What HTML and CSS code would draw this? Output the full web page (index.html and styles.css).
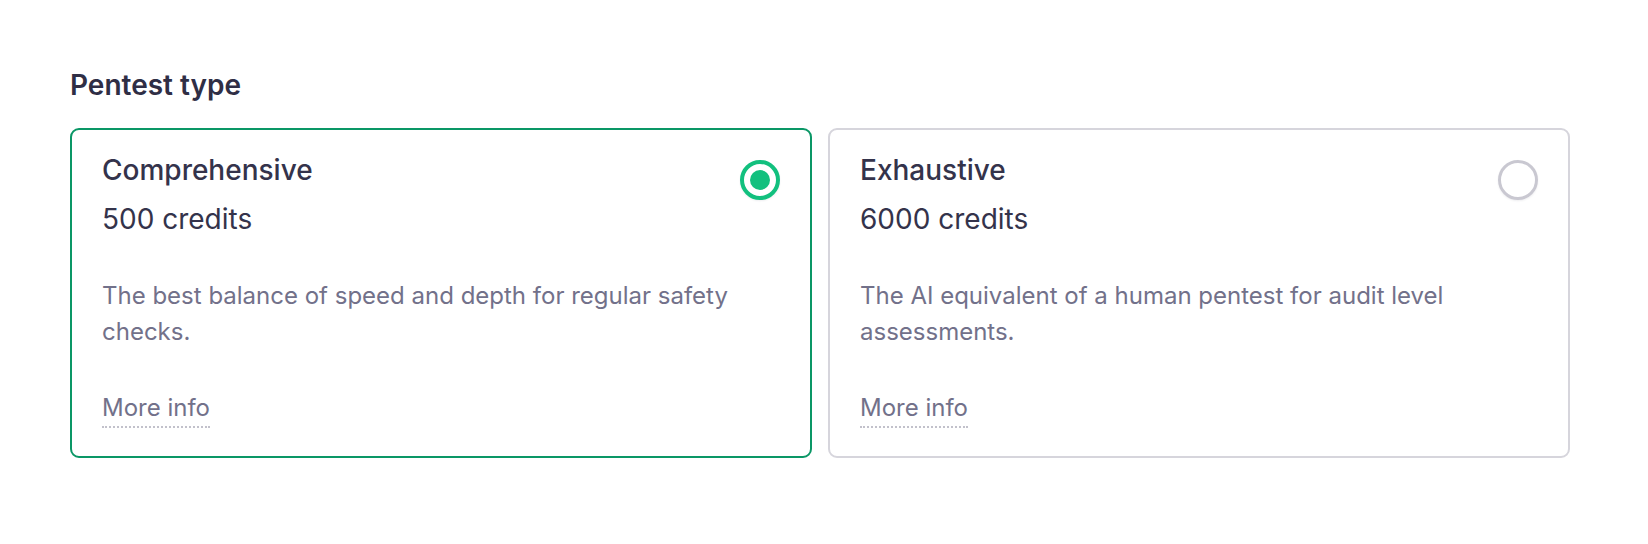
FILE: index.html
```html
<!DOCTYPE html>
<html lang="en">
<head>
<meta charset="utf-8">
<title>Pentest type</title>
<link rel="stylesheet" href="styles.css">
</head>
<body>
<main class="page">
  <h2 class="section-title">Pentest type</h2>
  <div class="options">
    <label class="option option--selected">
      <div class="option-head">
        <div class="option-text">
          <div class="option-name">Comprehensive</div>
          <div class="option-credits">500 credits</div>
        </div>
        <span class="radio radio--on"><span class="radio-dot"></span></span>
      </div>
      <p class="option-desc">The best balance of speed and depth for regular safety checks.</p>
      <a class="more-info">More info</a>
    </label>
    <label class="option">
      <div class="option-head">
        <div class="option-text">
          <div class="option-name">Exhaustive</div>
          <div class="option-credits">6000 credits</div>
        </div>
        <span class="radio"></span>
      </div>
      <p class="option-desc">The AI equivalent of a human pentest for audit level assessments.</p>
      <a class="more-info">More info</a>
    </label>
  </div>
</main>
</body>
</html>
```

FILE: styles.css
```css
* { box-sizing: border-box; }
html, body { margin: 0; padding: 0; background: #ffffff; }
body {
  font-family: Inter, "Noto Sans", "Liberation Sans", sans-serif;
  color: #2f2e45;
}
.page {
  padding: 66px 78px 0 70px;
}
.section-title {
  margin: 0 0 24px 0;
  font-size: 28px;
  line-height: 38px;
  font-weight: 600;
  color: #2f2e45;
}
.options {
  display: grid;
  grid-template-columns: 1fr 1fr;
  gap: 16px;
}
.option {
  display: flex;
  flex-direction: column;
  align-items: flex-start;
  height: 330px;
  padding: 22px 30px 24px 30px;
  border: 2px solid #d6d5dc;
  border-radius: 9px;
  background: #fff;
}
.option--selected { border-color: #0a9766; }
.option-head {
  display: flex;
  width: 100%;
  justify-content: space-between;
  align-items: flex-start;
}
.option-name {
  font-size: 28px;
  line-height: 36px;
  font-weight: 500;
  color: #34334b;
}
.option-credits {
  margin-top: 13px;
  font-size: 28px;
  line-height: 36px;
  font-weight: 400;
  color: #34334b;
}
.radio {
  flex: none;
  margin-top: 8px;
  width: 40px;
  height: 40px;
  border: 3px solid #c9c8d1;
  border-radius: 50%;
  display: flex;
  align-items: center;
  justify-content: center;
  box-shadow: 0 1px 2px rgba(40, 40, 60, 0.08);
}
.radio--on { border: 4px solid #12c07e; }
.radio-dot {
  width: 20px;
  height: 20px;
  border-radius: 50%;
  background: #12c07e;
}
.option-desc {
  margin: 41px 0 0 0;
  font-size: 24px;
  line-height: 36px;
  color: #72718a;
  max-width: 660px;
}
.more-info {
  margin-top: 43px;
  font-size: 24px;
  line-height: 30px;
  color: #72718a;
  border-bottom: 2px dotted #c2c1cb;
  padding-bottom: 3px;
}
```
